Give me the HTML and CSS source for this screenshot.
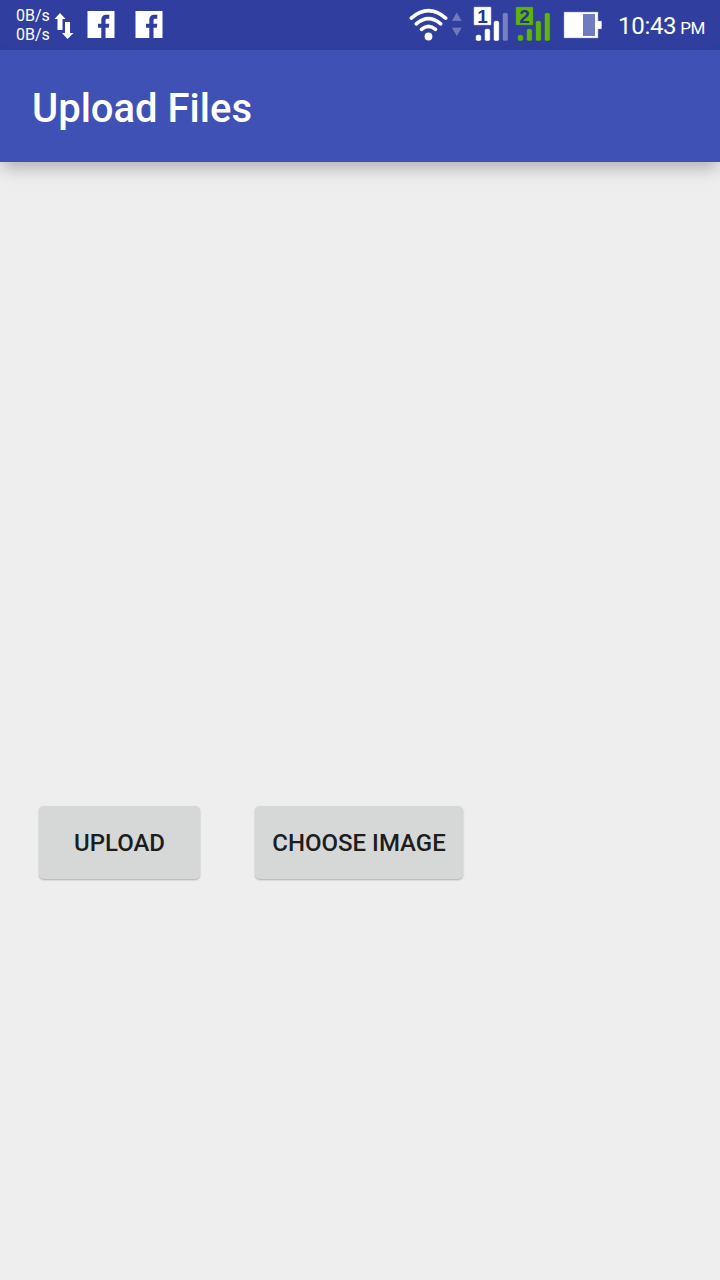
FILE: index.html
```
<!DOCTYPE html>
<html lang="en">
<head>
<meta charset="utf-8">
<title>Upload Files</title>
<link rel="stylesheet" href="styles.css">
</head>
<body>
<div class="screen">
  <div class="status-bar">
    <div class="notifications">
      <div class="speed"><span>0B/s</span><span>0B/s</span></div>
      <svg class="transfer" width="20" height="50" viewBox="54 0 20 50" fill="#fff"><path d="M60 13l5.500 6h-3v11h-5V19h-3zM65 22h5v11h3.500L67.500 39 62 33h3z"/></svg>
      <svg class="facebook" width="28" height="28" viewBox="0 0 28 28"><path fill="#fff" d="M.5 0H27.500V27H18.500V16.700h3.300l.5-4H18.500v-3c0-1.400.6-2 1.900-2h1.900V3.700h-2.500c-4 0-5.500 2-5.500 5.500v3.500H11v4h3.300V27H.5z"/></svg>
      <svg class="facebook" width="28" height="28" viewBox="0 0 28 28"><path fill="#fff" d="M.5 0H27.500V27H18.500V16.700h3.300l.5-4H18.500v-3c0-1.400.6-2 1.900-2h1.900V3.700h-2.500c-4 0-5.500 2-5.500 5.500v3.500H11v4h3.300V27H.5z"/></svg>
    </div>
    <div class="indicators">
      <svg width="64" height="50" viewBox="406 0 64 50"><g fill="none" stroke="#fff" stroke-width="3.700" stroke-linecap="round"><path d="M411.300 18.100Q428.500 3.300 445.700 18.100"/><path d="M416.300 23.800Q428.500 13.500 440.700 23.800"/><path d="M421.500 29.300Q428.500 23.300 435.500 29.300"/></g><circle cx="428.500" cy="36.500" r="3.900" fill="#fff"/><path fill="#7079bf" stroke="#27358b" stroke-width=".6" d="M456.800 11.800L462.300 21.300H451.300zM451.300 27.200H462.300L456.800 36.800z"/></svg>
      <svg width="42" height="50" viewBox="470 0 42 50"><g fill="#fff" stroke="#26348b" stroke-width=".4"><rect x="473.700" y="6.700" width="17.600" height="18.600" rx="1"/><rect x="475.700" y="34.700" width="5.600" height="6.300" rx="1.700"/><rect x="484.600" y="28.700" width="5.600" height="12.300" rx="1.700"/><rect x="493.600" y="20.700" width="5.600" height="20.300" rx="1.700"/><rect x="502.500" y="12.700" width="5.600" height="28.300" rx="1.700" fill="#7780c3"/></g><text class="sim" x="482.500" y="22.700">1</text></svg>
      <svg width="42" height="50" viewBox="512 0 42 50"><g fill="#5eb40b" stroke="#26348b" stroke-width=".4"><rect x="515.700" y="6.700" width="17.600" height="18.600" rx="1"/><rect x="517.700" y="34.700" width="5.600" height="6.300" rx="1.700"/><rect x="526.600" y="28.700" width="5.600" height="12.300" rx="1.700"/><rect x="535.600" y="20.700" width="5.600" height="20.300" rx="1.700"/><rect x="544.500" y="12.700" width="5.600" height="28.300" rx="1.700"/></g><text class="sim" x="524.500" y="22.700">2</text></svg>
      <svg width="50" height="50" viewBox="554 0 50 50"><path fill="#fff" stroke="#26348b" stroke-width=".6" d="M563.700 11.700H598.300V20.700H602V29.300H598.300V38.300H563.700z"/><path fill="#717bbf" d="M583 14h12v22h-12z"/></svg>
      <div class="clock">10:43<span class="period">PM</span></div>
    </div>
  </div>
  <header class="app-bar"><h1 class="title">Upload Files</h1></header>
  <main class="content">
    <div class="actions">
      <button class="button upload" type="button">UPLOAD</button>
      <button class="button choose" type="button">CHOOSE IMAGE</button>
    </div>
  </main>
</div>
</body>
</html>
```
FILE: styles.css
```
* { box-sizing: border-box; }
body { margin: 0; font-family: Roboto, sans-serif; }
.screen { width: 720px; height: 1280px; display: flex; flex-direction: column; background: #eee; overflow: hidden; }
.status-bar { height: 50px; flex: none; display: flex; justify-content: space-between; background: #303f9f; color: #fff; }
.notifications { display: flex; align-items: center; padding-left: 16px; }
.speed { display: flex; flex-direction: column; width: 38px; font-size: 16px; line-height: 19px; }
.transfer { margin-right: 13px; }
.facebook { margin-right: 20px; }
.indicators { display: flex; align-items: center; }
.indicators svg { flex: none; }
.sim { font: bold 19px "Liberation Sans", sans-serif; fill: #25358c; text-anchor: middle; }
.clock { width: 116px; padding: 3px 0 0 14px; font-size: 24px; line-height: 50px; white-space: nowrap; letter-spacing: -.3px; }
.period { margin-left: 4px; font-size: 17px; letter-spacing: -.6px; }
.app-bar { height: 112px; flex: none; display: flex; align-items: center; padding: 6px 32px 0; background: #3f51b5; box-shadow: 0 8px 16px -2px rgba(0, 0, 0, .26); }
.title { margin: 0; font-size: 40px; font-weight: 500; line-height: 48px; color: #fff; }
.content { flex: 1; padding: 644px 39px 0; }
.actions { display: flex; gap: 55px; }
.button { height: 73px; padding: 0; border: 0; border-radius: 5px; background: #d6d8d7; box-shadow: 0 1px 2px rgba(0, 0, 0, .28); color: #1c1d1d; font: 500 24px Roboto, sans-serif; white-space: nowrap; }
.upload { width: 161px; }
.choose { width: 208px; }
```
